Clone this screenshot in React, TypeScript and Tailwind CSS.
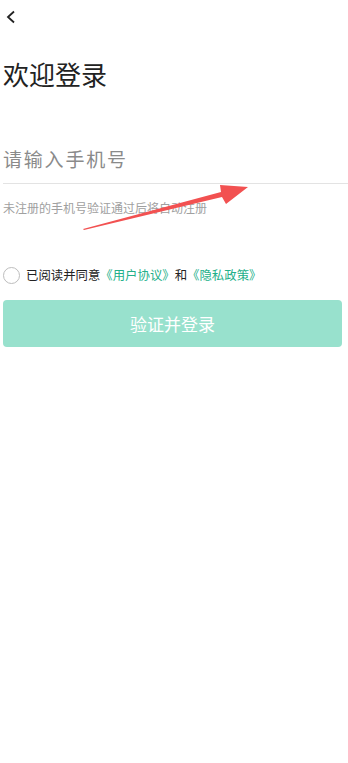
const font = { fontFamily: '"Noto Sans CJK SC", "Noto Sans", sans-serif' };

const App = () => {
  return (
    <div className="relative min-h-screen bg-white text-[#222]" style={font}>
      <div className="h-[32px] pl-[5px] pt-[10px]">
        <svg width="12" height="14" viewBox="0 0 12 14" fill="none">
          <path d="M9 1.5 L3 7 L9 12.5" stroke="#222" strokeWidth="1.8" />
        </svg>
      </div>

      <h1 className="mt-[22px] pl-[3px] text-[26px] leading-[40px] font-normal">欢迎登录</h1>

      <div className="mt-[50px] pl-[3px]">
        <div className="h-[40px] border-b border-[#e3e3e3] text-[19px] tracking-[1.8px] leading-[30px] text-[#8a8a8a]">
          请输入手机号
        </div>
        <p className="mt-[14px] text-[12px] leading-[20px] text-[#a0a0a0]">
          未注册的手机号验证通过后将自动注册
        </p>
      </div>

      <div className="mt-[47px] flex items-center gap-[6px] pl-[3px] text-[12.4px] leading-[20px]">
        <span className="h-[17px] w-[17px] rounded-full border border-[#bdbdbd]" />
        <span>
          已阅读并同意
          <span className="text-[#23b08a]">《用户协议》</span>和
          <span className="text-[#23b08a]">《隐私政策》</span>
        </span>
      </div>

      <div className="mx-[3px] mt-[15px] mr-[6px] flex h-[47px] items-center justify-center rounded-[4px] bg-[#98e1cd] text-[17px] text-white">
        验证并登录
      </div>

      <svg className="pointer-events-none absolute left-0 top-0" width="348" height="763">
        <polygon points="84,230 222,197 226,204 248,187 220,185 221,192 83,229" fill="#f25151" />
      </svg>
    </div>
  );
};

export default App;
